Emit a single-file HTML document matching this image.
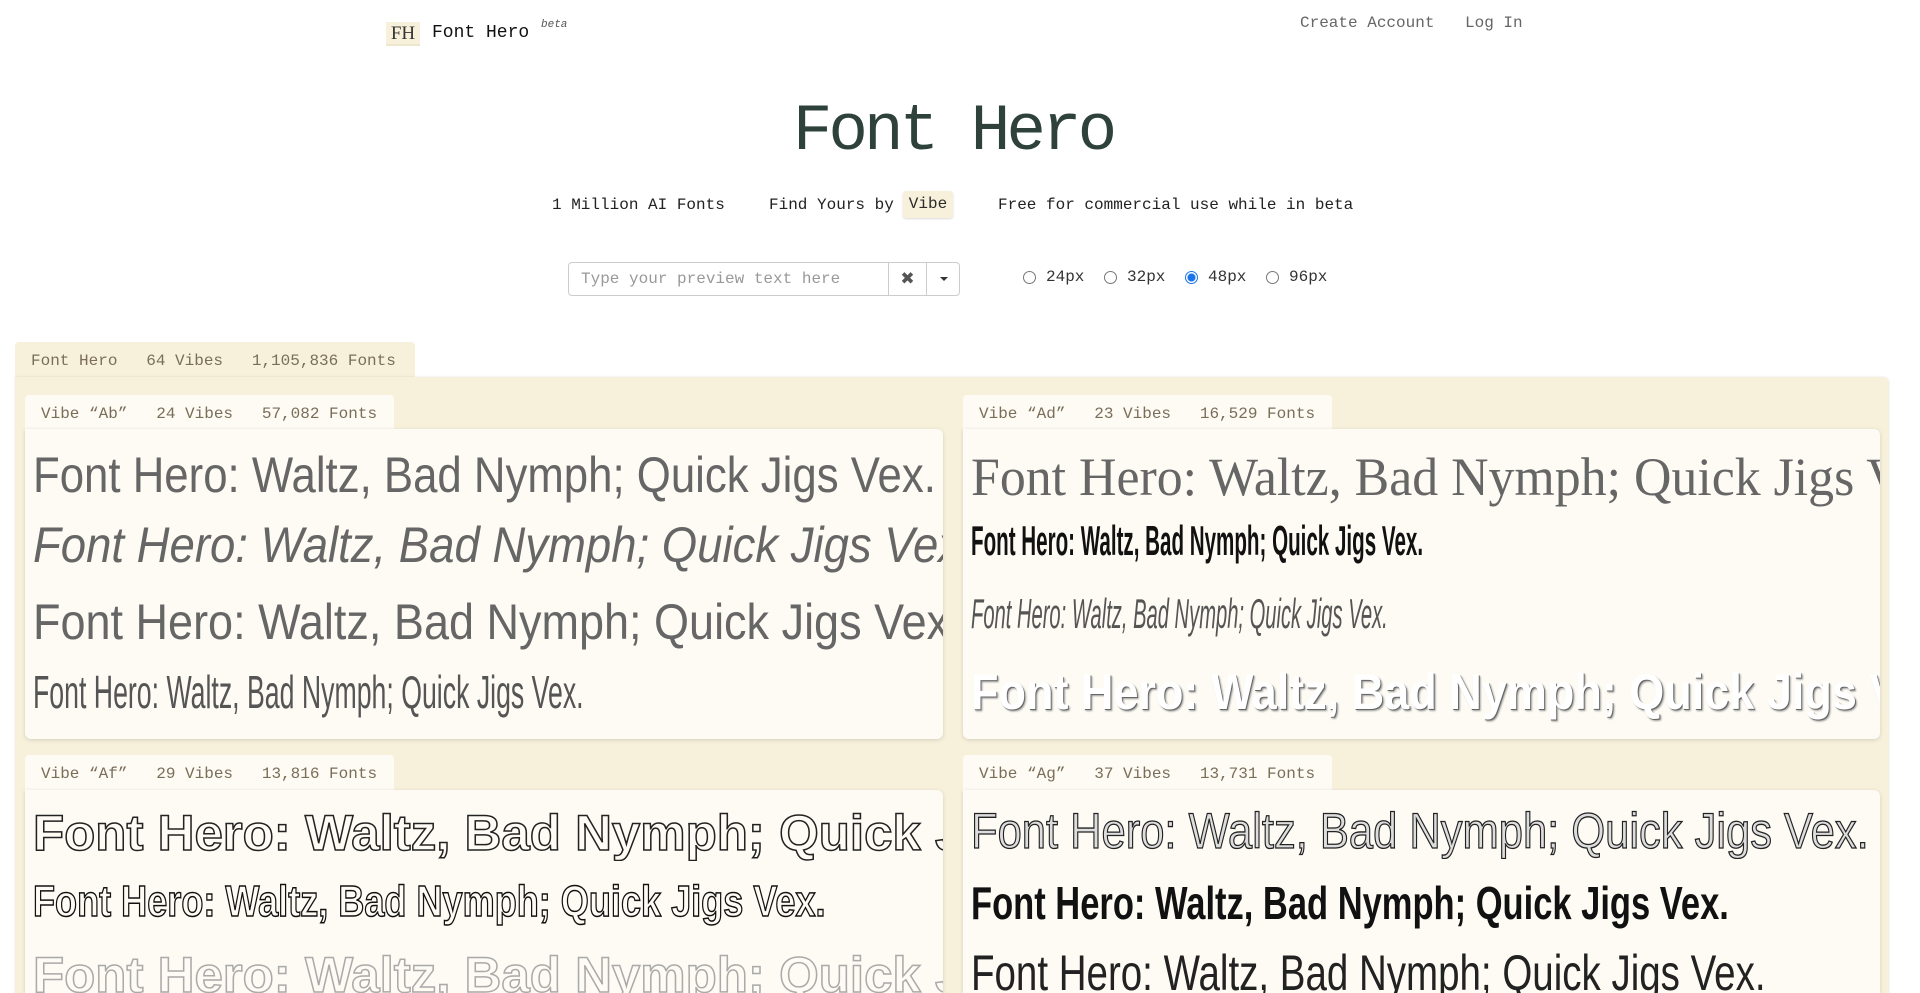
<!DOCTYPE html>
<html style="overflow:hidden;height:993px"><head><meta charset="utf-8">
<style>
*{box-sizing:border-box;margin:0;padding:0}
body{width:1920px;height:993px;overflow:hidden;background:#fff;font-family:"Liberation Mono",monospace;color:#2b2b2b;position:relative}
.abs{position:absolute;white-space:nowrap}
.logo{left:386px;top:22px;width:34px;height:24px;background:#f7f1dc;border-bottom:2px solid #efe7cc;font-family:"Liberation Serif",serif;font-size:19px;color:#333;text-align:center;line-height:24px}
.title{left:0;width:1906px;text-align:center;top:92px;font-size:66px;letter-spacing:-4px;color:#2e423b;line-height:80px}
.sub{top:196px;font-size:16px;color:#222}
.vibe{left:903px;top:191px;width:50px;height:27px;background:#f7f1dc;border-radius:3px;box-shadow:0 1px 2px rgba(0,0,0,.15);font-size:16px;line-height:27px;text-align:center}
.inp{left:568px;top:262px;width:392px;height:34px;border:1px solid #ccc;border-radius:4px;background:#fff}
.inp .ph{position:absolute;left:12px;top:7px;font-size:16px;color:#999}
.inp .b1{position:absolute;left:319px;top:0;width:38px;height:32px;border-left:1px solid #ccc;text-align:center;line-height:32px;color:#555;font-size:17px;font-family:"DejaVu Sans",sans-serif}
.inp .b2{position:absolute;left:357px;top:0;width:33px;height:32px;border-left:1px solid #ccc}
.inp .b2:after{content:"";position:absolute;left:13px;top:14px;border-left:4px solid transparent;border-right:4px solid transparent;border-top:4px solid #333}
.radio{top:271px;width:13px;height:13px;border:1px solid #777;border-radius:50%;background:#fff}
.radio.on{border-color:#1a73e8;background:radial-gradient(circle,#1a73e8 3.5px,#fff 4.5px)}
.rl{top:268px;font-size:16px;color:#333}
.otab{left:15px;top:342px;width:400px;height:36px;background:#f7f1dc;border-radius:4px 4px 0 0;font-size:16px;color:#7a6e5a;padding:10px 0 0 16px}
.panel{left:15px;top:377px;width:1874px;height:616px;background:#f7f1dc;border-radius:0 6px 0 0;box-shadow:0 0 2px rgba(0,0,0,.12)}
.tab{height:36px;background:#fdfbf3;border-radius:4px 4px 0 0;font-size:16px;color:#7a6e5a;padding:10px 0 0 16px}
.card{background:#fdfbf3;border-radius:0 6px 6px 6px;box-shadow:0 1px 4px rgba(0,0,0,.15);overflow:hidden}
.ln{position:absolute;left:8px;white-space:nowrap;font-family:"Liberation Sans",sans-serif;transform-origin:0 50%}
</style></head><body>
<div class="abs logo">FH</div>
<div class="abs" style="left:432px;top:23px;font-size:18px;color:#111">Font Hero</div>
<div class="abs" style="left:541px;top:19px;font-size:11px;font-style:italic;color:#555">beta</div>
<div class="abs" style="left:1300px;top:14px;font-size:16px;color:#666">Create Account</div>
<div class="abs" style="left:1465px;top:14px;font-size:16px;color:#666">Log In</div>
<div class="abs title">Font Hero</div>
<div class="abs sub" style="left:552px">1 Million AI Fonts</div>
<div class="abs sub" style="left:769px">Find Yours by</div>
<div class="abs vibe">Vibe</div>
<div class="abs sub" style="left:998px">Free for commercial use while in beta</div>
<div class="abs inp"><span class="ph">Type your preview text here</span><span class="b1">✖</span><span class="b2"></span></div>
<div class="abs radio" style="left:1023px"></div><div class="abs rl" style="left:1046px">24px</div>
<div class="abs radio" style="left:1104px"></div><div class="abs rl" style="left:1127px">32px</div>
<div class="abs radio on" style="left:1185px"></div><div class="abs rl" style="left:1208px">48px</div>
<div class="abs radio" style="left:1266px"></div><div class="abs rl" style="left:1289px">96px</div>

<div class="abs otab">Font Hero&nbsp;&nbsp;&nbsp;64 Vibes&nbsp;&nbsp;&nbsp;1,105,836 Fonts</div>
<div class="abs panel"></div>

<div class="abs tab" style="left:25px;top:395px;width:369px">Vibe “Ab”&nbsp;&nbsp;&nbsp;24 Vibes&nbsp;&nbsp;&nbsp;57,082 Fonts</div>
<div class="abs card" style="left:25px;top:429px;width:918px;height:310px">
<div class="ln" style="top:17px;font-size:50px;color:#666;transform:scaleX(.875)">Font Hero: Waltz, Bad Nymph; Quick Jigs Vex.</div>
<div class="ln" style="top:87px;font-size:50px;font-style:italic;color:#666;transform:scaleX(.91)">Font Hero: Waltz, Bad Nymph; Quick Jigs Vex.</div>
<div class="ln" style="top:164px;font-size:50px;color:#666;transform:scaleX(.9)">Font Hero: Waltz, Bad Nymph; Quick Jigs Vex.</div>
<div class="ln" style="top:236px;font-size:46px;color:#555;transform:scaleX(.58)">Font Hero: Waltz, Bad Nymph; Quick Jigs Vex.</div>
</div>

<div class="abs tab" style="left:963px;top:395px;width:369px">Vibe “Ad”&nbsp;&nbsp;&nbsp;23 Vibes&nbsp;&nbsp;&nbsp;16,529 Fonts</div>
<div class="abs card" style="left:963px;top:429px;width:917px;height:310px">
<div class="ln" style="top:17px;font-family:'Liberation Serif',serif;font-size:54px;color:#666;transform:scaleX(.96)">Font Hero: Waltz, Bad Nymph; Quick Jigs Vex.</div>
<div class="ln" style="top:88px;font-size:42px;font-weight:bold;color:#111;transform:scaleX(.49)">Font Hero: Waltz, Bad Nymph; Quick Jigs Vex.</div>
<div class="ln" style="top:161px;font-size:42px;font-style:italic;color:#555;transform:scaleX(.48)">Font Hero: Waltz, Bad Nymph; Quick Jigs Vex.</div>
<div class="ln" style="top:234px;font-size:50px;font-weight:bold;color:#fff;text-shadow:1px 1px 0 #666,2px 2px 2px #999;transform:scaleX(.9)">Font Hero: Waltz, Bad Nymph; Quick Jigs Vex.</div>
</div>

<div class="abs tab" style="left:25px;top:755px;width:369px">Vibe “Af”&nbsp;&nbsp;&nbsp;29 Vibes&nbsp;&nbsp;&nbsp;13,816 Fonts</div>
<div class="abs card" style="left:25px;top:790px;width:918px;height:203px;border-radius:0 6px 0 0">
<div class="ln" style="top:14px;font-size:50px;font-weight:bold;color:transparent;-webkit-text-stroke:1.5px #222;transform:scaleX(1.02)">Font Hero: Waltz, Bad Nymph; Quick Jigs Vex.</div>
<div class="ln" style="top:87px;font-size:44px;font-weight:bold;color:transparent;-webkit-text-stroke:1.5px #111;transform:scaleX(.82)">Font Hero: Waltz, Bad Nymph; Quick Jigs Vex.</div>
<div class="ln" style="top:156px;font-size:50px;font-weight:bold;color:transparent;-webkit-text-stroke:1.5px #aaa;transform:scaleX(1.02)">Font Hero: Waltz, Bad Nymph; Quick Jigs Vex.</div>
</div>

<div class="abs tab" style="left:963px;top:755px;width:369px">Vibe “Ag”&nbsp;&nbsp;&nbsp;37 Vibes&nbsp;&nbsp;&nbsp;13,731 Fonts</div>
<div class="abs card" style="left:963px;top:790px;width:917px;height:203px;border-radius:0 6px 0 0">
<div class="ln" style="top:12px;font-size:50px;color:#ddd;-webkit-text-stroke:1.3px #222;transform:scaleX(.87)">Font Hero: Waltz, Bad Nymph; Quick Jigs Vex.</div>
<div class="ln" style="top:86px;font-size:46px;font-weight:bold;color:#111;transform:scaleX(.75)">Font Hero: Waltz, Bad Nymph; Quick Jigs Vex.</div>
<div class="ln" style="top:154px;font-size:50px;color:#222;transform:scaleX(.77)">Font Hero: Waltz, Bad Nymph; Quick Jigs Vex.</div>
</div>
</body></html>
